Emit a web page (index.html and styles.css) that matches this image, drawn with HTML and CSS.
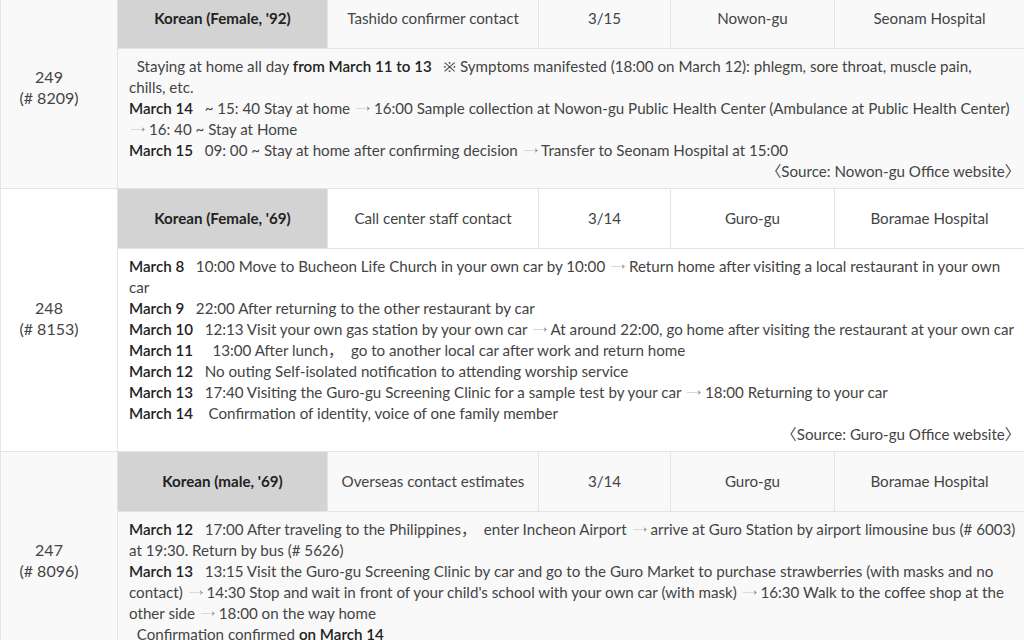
FILE: index.html
```html
<!DOCTYPE html>
<html lang="en">
<head>
<meta charset="utf-8">
<title>Patient routes</title>
<link rel="stylesheet" href="styles.css">
</head>
<body>
<table class="cases">
  <colgroup>
    <col class="c-no"><col class="c-who"><col class="c-route"><col class="c-date"><col class="c-area"><col class="c-hosp">
  </colgroup>
  <tbody>
    <tr class="odd head">
      <td class="no" rowspan="2">249<br>(# 8209)</td>
      <td class="who">Korean (Female, '92)</td>
      <td>Tashido confirmer contact</td>
      <td>3/15</td>
      <td>Nowon-gu</td>
      <td>Seonam Hospital</td>
    </tr>
    <tr class="odd">
      <td class="detail" colspan="5">
        <p>&nbsp;&nbsp;Staying at home all day <b>from March 11 to 13</b> &nbsp;&nbsp;※ Symptoms manifested (18:00 on March 12): phlegm, sore throat, muscle pain,<br>chills, etc.</p>
        <p><b>March 14</b> &nbsp;&nbsp;~ 15: 40 Stay at home <i class="arr"></i> 16:00 Sample collection at Nowon-gu Public Health Center (Ambulance at Public Health Center)<br><i class="arr"></i> 16: 40 ~ Stay at Home</p>
        <p><b>March 15</b> &nbsp;&nbsp;09: 00 ~ Stay at home after confirming decision <i class="arr"></i> Transfer to Seonam Hospital at 15:00</p>
        <p class="src">〈Source: Nowon-gu Office website〉</p>
      </td>
    </tr>

    <tr class="head">
      <td class="no" rowspan="2">248<br>(# 8153)</td>
      <td class="who">Korean (Female, '69)</td>
      <td>Call center staff contact</td>
      <td>3/14</td>
      <td>Guro-gu</td>
      <td>Boramae Hospital</td>
    </tr>
    <tr>
      <td class="detail" colspan="5">
        <p><b>March 8</b> &nbsp;&nbsp;10:00 Move to Bucheon Life Church in your own car by 10:00 <i class="arr"></i> Return home after visiting a local restaurant in your own<br>car</p>
        <p><b>March 9</b> &nbsp;&nbsp;22:00 After returning to the other restaurant by car</p>
        <p><b>March 10</b> &nbsp;&nbsp;12:13 Visit your own gas station by your own car <i class="arr"></i> At around 22:00, go home after visiting the restaurant at your own car</p>
        <p><b>March 11</b> &nbsp;&nbsp;&nbsp; 13:00 After lunch， &nbsp;go to another local car after work and return home</p>
        <p><b>March 12</b> &nbsp;&nbsp;No outing Self-isolated notification to attending worship service</p>
        <p><b>March 13</b> &nbsp;&nbsp;17:40 Visiting the Guro-gu Screening Clinic for a sample test by your car <i class="arr"></i> 18:00 Returning to your car</p>
        <p><b>March 14</b> &nbsp;&nbsp; Confirmation of identity, voice of one family member</p>
        <p class="src">〈Source: Guro-gu Office website〉</p>
      </td>
    </tr>

    <tr class="odd head">
      <td class="no" rowspan="2">247<br>(# 8096)</td>
      <td class="who">Korean (male, '69)</td>
      <td>Overseas contact estimates</td>
      <td>3/14</td>
      <td>Guro-gu</td>
      <td>Boramae Hospital</td>
    </tr>
    <tr class="odd">
      <td class="detail" colspan="5">
        <p><b>March 12</b> &nbsp;&nbsp;17:00 After traveling to the Philippines， &nbsp;enter Incheon Airport <i class="arr"></i> arrive at Guro Station by airport limousine bus (# 6003)<br>at 19:30. Return by bus (# 5626)</p>
        <p><b>March 13</b> &nbsp;&nbsp;13:15 Visit the Guro-gu Screening Clinic by car and go to the Guro Market to purchase strawberries (with masks and no<br>contact) <i class="arr"></i> 14:30 Stop and wait in front of your child's school with your own car (with mask) <i class="arr"></i> 16:30 Walk to the coffee shop at the<br>other side <i class="arr"></i> 18:00 on the way home</p>
        <p>&nbsp;&nbsp;Confirmation confirmed <b>on March 14</b></p>
        <p class="src">〈Source: Guro-gu Office website〉</p>
      </td>
    </tr>
  </tbody>
</table>
</body>
</html>
```

FILE: styles.css
```css
html, body {
  margin: 0;
  padding: 0;
  background: #ffffff;
}

body {
  font-family: "Lato", "Noto Sans", "Noto Sans CJK KR", sans-serif;
  font-size: 15.15px;
  color: #444444;
  overflow: hidden;
}

.cases {
  width: 1024px;
  margin-top: -12px;
  border-collapse: collapse;
  table-layout: fixed;
}

.c-no { width: 117px; }
.c-who { width: 210px; }
.c-route { width: 211px; }
.c-date { width: 132px; }
.c-area { width: 164px; }
.c-hosp { width: 190px; }

.cases td {
  border: 1px solid #e4e4e4;
  padding: 0;
  text-align: center;
  vertical-align: middle;
  line-height: 21px;
}

.cases tr.odd td {
  background: #f9f9f9;
}

.cases tr.head td {
  height: 59px;
}

.cases tr td.who {
  background: #d3d3d3;
  color: #222222;
  font-weight: 700;
}

.cases td.no {
  font-size: 16px;
  color: #444444;
  padding: 0 20px 4px 0;
}

.cases td.detail {
  text-align: left;
  vertical-align: top;
  padding: 7px 4px 6px 11px;
}

.detail p {
  margin: 0;
  white-space: nowrap;
}

.detail b {
  color: #222222;
  font-weight: 600;
}

.detail .src {
  text-align: right;
}

.arr {
  display: inline-block;
  width: 14px;
  height: 8px;
  margin-left: 2px;
  vertical-align: 1px;
  background:
    linear-gradient(#d9d9d9, #d9d9d9) 0 3px / 12px 1px no-repeat;
  position: relative;
}

.arr::after {
  content: "";
  position: absolute;
  right: 1px;
  top: 2px;
  width: 2px;
  height: 2px;
  border-top: 1px solid #888888;
  border-right: 1px solid #888888;
  transform: rotate(45deg);
}
```
